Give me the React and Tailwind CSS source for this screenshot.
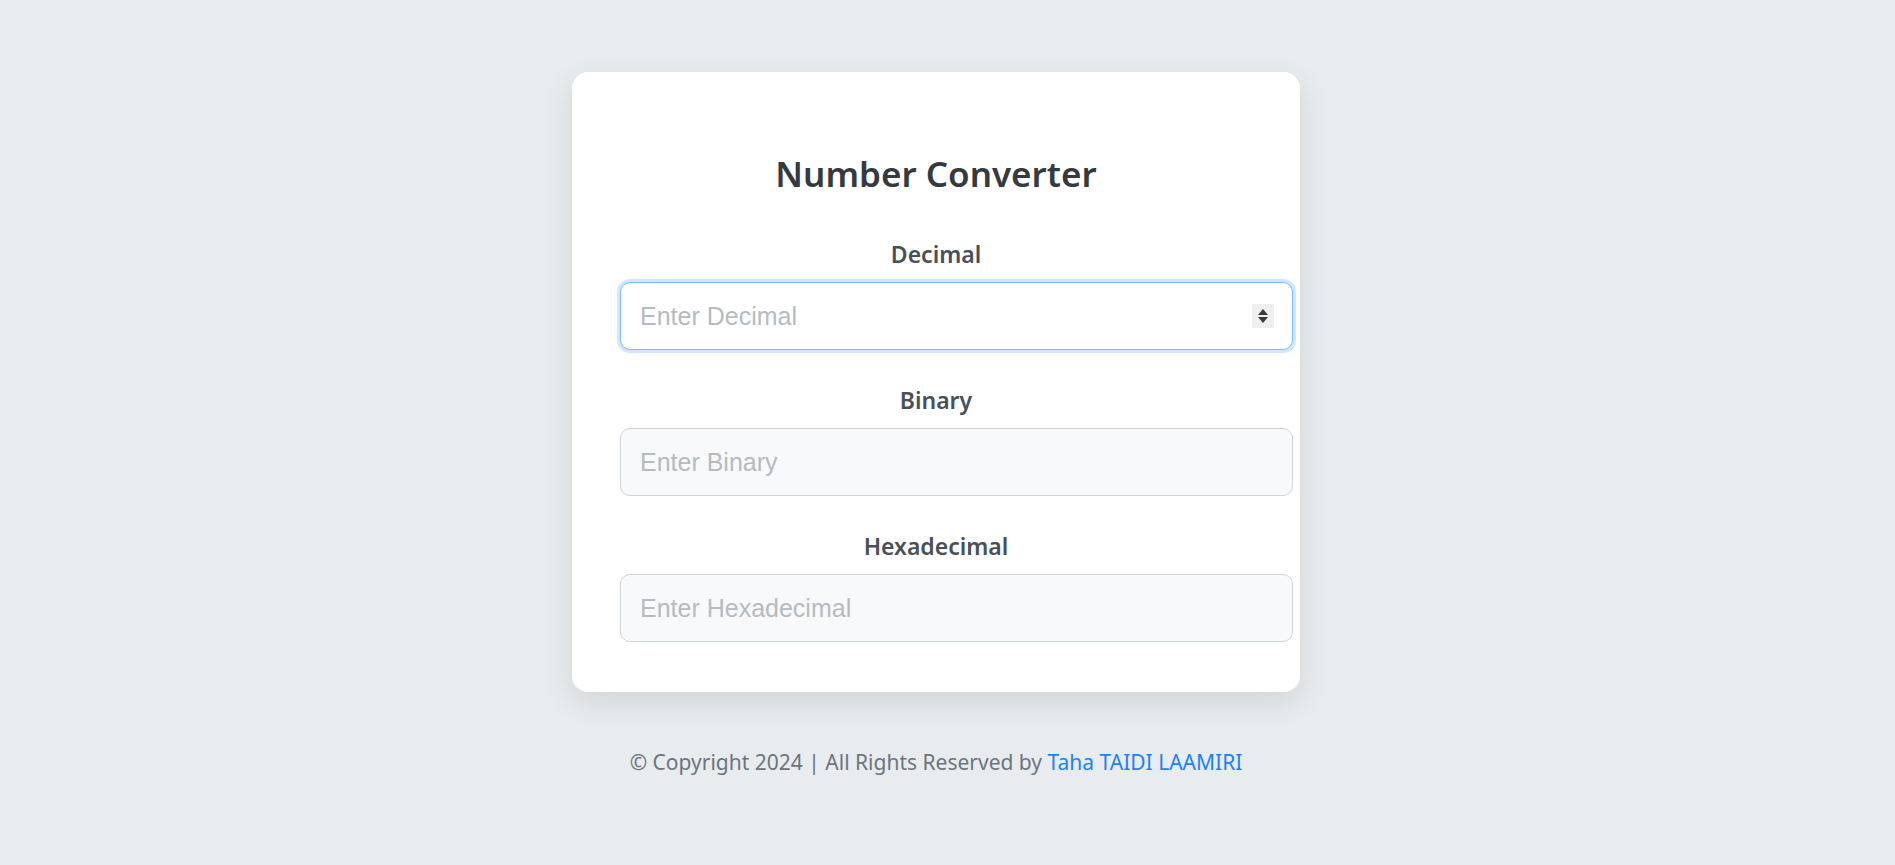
import React, { useState } from 'react';

function Spinner() {
  return (
    <div className="absolute right-[19px] top-1/2 -translate-y-1/2 w-[22px] h-[24px] bg-[#efefef] flex flex-col items-center justify-center gap-[2px]">
      <svg width="10" height="6" viewBox="0 0 10 6"><path d="M5 0 L10 6 L0 6 Z" fill="#3a3a3a" /></svg>
      <svg width="10" height="6" viewBox="0 0 10 6"><path d="M0 0 L10 0 L5 6 Z" fill="#3a3a3a" /></svg>
    </div>
  );
}

function Field({ label, placeholder, value, onChange, focused, number }) {
  return (
    <div className="flex flex-col">
      <label className="text-center text-[23px] leading-[28px] font-semibold text-[#495057] mb-[14px]">
        {label}
      </label>
      <div className="relative w-[673px]">
        <input
          type="text"
          value={value}
          onChange={onChange}
          placeholder={placeholder}
          className={`w-full h-[68px] rounded-[10px] px-[19px] text-[25px] outline-none placeholder:text-[#b4bbc1] text-[#495057] ${
            focused
              ? 'bg-white border-[1.5px] border-[#80bdff] shadow-[0_0_0_3px_rgba(0,123,255,0.18)]'
              : 'bg-[#f8f9fa] border-[1.5px] border-[#ced4da]'
          }`}
          style={{ fontFamily: '"Liberation Sans", Arial, sans-serif' }}
        />
        {number && <Spinner />}
      </div>
    </div>
  );
}

export default function App() {
  const [dec, setDec] = useState('');
  const [bin, setBin] = useState('');
  const [hex, setHex] = useState('');

  const fromDec = (v) => {
    setDec(v);
    const n = parseInt(v, 10);
    setBin(isNaN(n) ? '' : n.toString(2));
    setHex(isNaN(n) ? '' : n.toString(16).toUpperCase());
  };
  const fromBin = (v) => {
    setBin(v);
    const n = parseInt(v, 2);
    setDec(isNaN(n) ? '' : String(n));
    setHex(isNaN(n) ? '' : n.toString(16).toUpperCase());
  };
  const fromHex = (v) => {
    setHex(v);
    const n = parseInt(v, 16);
    setDec(isNaN(n) ? '' : String(n));
    setBin(isNaN(n) ? '' : n.toString(2));
  };

  return (
    <div
      className="min-h-screen w-full bg-[#e8ecef] flex flex-col items-center pr-[23px]"
      style={{ fontFamily: '"Noto Sans", "Open Sans", sans-serif' }}
    >
      <div className="mt-[72px] w-[728px] bg-white rounded-[16px] shadow-[0_10px_30px_rgba(0,0,0,0.10)] pt-[80px] pb-[50px] px-[48px]">
        <h1 className="text-center text-[35px] leading-[44px] font-semibold text-[#343a40] mb-[44px]">
          Number Converter
        </h1>
        <div className="flex flex-col gap-[36px]">
          <Field label="Decimal" placeholder="Enter Decimal" value={dec} onChange={(e) => fromDec(e.target.value)} focused number />
          <Field label="Binary" placeholder="Enter Binary" value={bin} onChange={(e) => fromBin(e.target.value)} />
          <Field label="Hexadecimal" placeholder="Enter Hexadecimal" value={hex} onChange={(e) => fromHex(e.target.value)} />
        </div>
      </div>
      <p className="mt-[56px] text-[21px] leading-[28px] text-[#6c757d]">
        © Copyright 2024 | All Rights Reserved by <a href="#" className="text-[#1a82fb]">Taha TAIDI LAAMIRI</a>
      </p>
    </div>
  );
}
